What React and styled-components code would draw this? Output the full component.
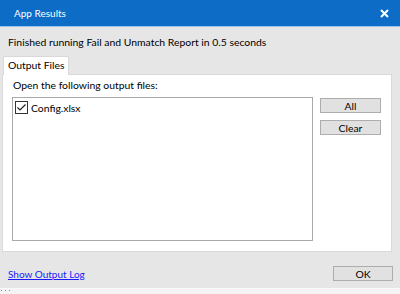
import React from "react";
import styled, { createGlobalStyle } from "styled-components";

const Global = createGlobalStyle`
  html, body { margin: 0; padding: 0; background: #f0f0f0; }
  body { font-family: "Lato", "Noto Sans", sans-serif; }
`;

const Window = styled.div`
  width: 400px;
  height: 294px;
  display: flex;
  flex-direction: column;
  background: #e6e6e6;
  font-family: "Lato", "Noto Sans", sans-serif;
  font-size: 10.4px;
  color: #000;
  overflow: hidden;
`;

const TitleBar = styled.div`
  height: 27px;
  flex: none;
  background: #0c6cc6;
  border-bottom: 1px solid #9cc4ea;
  box-sizing: border-box;
  display: flex;
  align-items: center;
  justify-content: space-between;
  padding: 0 11px 0 14px;
  color: #fff;
`;

const Title = styled.span`
  font-size: 10px;
`;

const CloseIcon = styled.svg`
  width: 9px;
  height: 9px;
  display: block;
`;

const Message = styled.div`
  padding: 8px 8px 0;
  line-height: 14px;
  height: 14px;
`;

const Tabs = styled.div`
  margin: 7px 8px 0 2px;
  display: flex;
  flex-direction: column;
`;

const TabStrip = styled.div`
  display: flex;
  padding-left: 1px;
  height: 18px;
`;

const Tab = styled.div`
  background: #fff;
  border: 1px solid #d9d9d9;
  border-bottom: none;
  padding: 0 3px 0 4px;
  line-height: 17px;
  position: relative;
  z-index: 1;
  margin-bottom: -1px;
`;

const Panel = styled.div`
  background: #fff;
  border: 1px solid #d9d9d9;
  height: 178px;
  box-sizing: border-box;
  padding: 3px 10px 10px 9px;
  display: flex;
  flex-direction: column;
`;

const Label = styled.div`
  line-height: 14px;
  padding-left: 1px;
`;

const Content = styled.div`
  margin-top: 5px;
  display: flex;
  gap: 7px;
  flex: 1;
`;

const ListBox = styled.div`
  width: 302px;
  height: 144px;
  box-sizing: border-box;
  border: 1px solid #a9a9a9;
  padding: 2px;
`;

const Item = styled.label`
  display: flex;
  align-items: center;
  gap: 3px;
  height: 15px;
`;

const Check = styled.svg`
  width: 13px;
  height: 13px;
  display: block;
`;

const Side = styled.div`
  display: flex;
  flex-direction: column;
  gap: 7px;
  padding-top: 1px;
`;

const Button = styled.button`
  width: ${(p) => p.$w || 61}px;
  height: 15px;
  box-sizing: border-box;
  background: #e1e1e1;
  border: 1px solid #adadad;
  font-family: inherit;
  font-size: 10.4px;
  line-height: 12px;
  padding: 0;
  color: #000;
`;

const Footer = styled.div`
  display: flex;
  align-items: center;
  justify-content: space-between;
  margin-top: 14px;
  padding: 0 7px 0 8px;
  height: 15px;
`;

const Link = styled.a`
  color: #1a1aff;
  font-size: 10px;
  text-decoration: underline;
  cursor: pointer;
`;

const Bottom = styled.div`
  margin-top: auto;
  height: 4px;
  background: #f4f4f4;
  border-top: 1px solid #fafafa;
  display: flex;
  gap: 3px;
  padding: 1px 0 0 1px;
`;

const Dot = styled.span`
  width: 1px;
  height: 1px;
  background: #8a8a8a;
`;

export default function App() {
  return (
    <Window>
      <Global />
      <TitleBar>
        <Title>App Results</Title>
        <CloseIcon viewBox="0 0 9 9">
          <path d="M1 1 L8 8 M8 1 L1 8" stroke="#fff" strokeWidth="2" />
        </CloseIcon>
      </TitleBar>
      <Message>Finished running Fail and Unmatch Report in 0.5 seconds</Message>
      <Tabs>
        <TabStrip>
          <Tab>Output Files</Tab>
        </TabStrip>
        <Panel>
          <Label>Open the following output files:</Label>
          <Content>
            <ListBox>
              <Item>
                <Check viewBox="0 0 13 13">
                  <rect x="0.5" y="0.5" width="12" height="12" fill="#fff" stroke="#333" />
                  <path d="M2.5 6.5 L5 9 L10.5 3.5" fill="none" stroke="#222" strokeWidth="1.2" />
                </Check>
                <span>Config.xlsx</span>
              </Item>
            </ListBox>
            <Side>
              <Button>All</Button>
              <Button>Clear</Button>
            </Side>
          </Content>
        </Panel>
      </Tabs>
      <Footer>
        <Link>Show Output Log</Link>
        <Button $w={60}>OK</Button>
      </Footer>
      <Bottom>
        <Dot />
        <Dot />
        <Dot />
      </Bottom>
    </Window>
  );
}
